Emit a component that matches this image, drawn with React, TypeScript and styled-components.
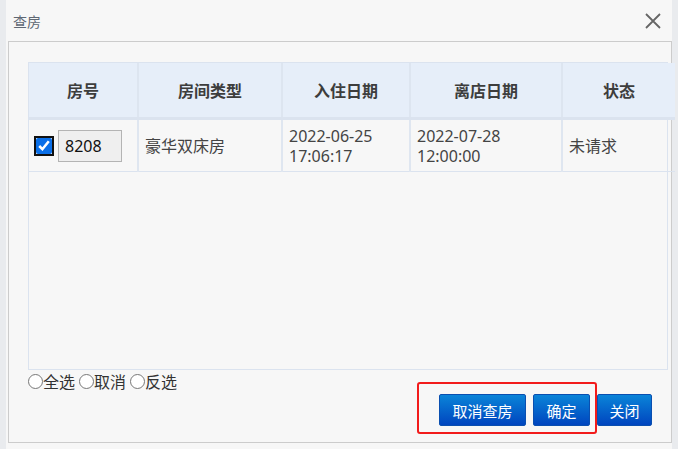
import styled, { createGlobalStyle } from "styled-components";

const GlobalStyle = createGlobalStyle`
  html, body {
    margin: 0;
    padding: 0;
    background: #e9ebee;
    font-family: "Noto Sans", "Noto Sans CJK SC", sans-serif;
  }
`

const Dialog = styled.div`
  width: 666px;
  height: 449px;
  margin-left: 6px;
  background: #f7f7f7;
  display: flex;
  flex-direction: column;
  box-sizing: border-box;
  padding: 0 0 6px 2px;
`

const TitleBar = styled.div`
  height: 41px;
  display: flex;
  align-items: center;
  justify-content: space-between;
  padding: 0 10px 0 5px;
  box-sizing: border-box;
  color: #5f6874;
  font-size: 14px;
`

const CloseBtn = styled.button`
  border: none;
  background: none;
  padding: 0;
  display: flex;
  color: #666;
  cursor: pointer;
`

const Body = styled.div`
  flex: 1;
  border: 1px solid #cccccc;
  padding: 20px 3px 0 19px;
  position: relative;
  display: flex;
  flex-direction: column;
`

const TableBox = styled.div`
  height: 308px;
  border: 1px solid #dbe3ef;
  box-sizing: border-box;
  background: #f7f7f7;
`

const Table = styled.table`
  width: 638px;
  border-collapse: collapse;
  table-layout: fixed;
  font-size: 16px;
  color: #444;
`

const Th = styled.th<{ w: number }>`
  width: ${p => p.w}px;
  height: 54px;
  padding: 0;
  background: #e6eef9;
  border-right: 2px solid #dde5f0;
  border-bottom: 3px solid #dbe3ef;
  font-weight: 700;
  color: #3d3d3d;
  &:last-child { border-right: none; }
`

const Td = styled.td`
  height: 51px;
  border-right: 2px solid #dfe6f0;
  border-bottom: 1px solid #dbe3ef;
  padding: 0 6px;
  line-height: 20px;
  &:last-child { border-right: none; }
`

const RoomCell = styled.div`
  display: flex;
  align-items: center;
  gap: 6px;
`

const Check = styled.input`
  width: 16px;
  height: 16px;
  margin: 0 0 0 1px;
  accent-color: #0a6fe8;
  outline: 2px solid #111;
  outline-offset: 0;
  border-radius: 2px;
`

const RoomInput = styled.input`
  width: 64px;
  height: 32px;
  box-sizing: border-box;
  background: #efefef;
  border: 1px solid #b4b4b4;
  padding: 0 6px;
  font-size: 16px;
  font-family: "Noto Sans", sans-serif;
  color: #111;
`

const RadioRow = styled.div`
  display: flex;
  align-items: center;
  gap: 4px;
  font-size: 16px;
  color: #333;
  height: 22px;
  label {
    display: flex;
    align-items: center;
  }
  input {
    margin: 0;
    width: 15px;
    height: 15px;
  }
`

const Buttons = styled.div`
  display: flex;
  justify-content: flex-end;
  gap: 7px;
  margin-top: 2px;
  padding-right: 16px;
`

const BlueButton = styled.button<{ w: number }>`
  width: ${p => p.w}px;
  height: 32px;
  border: 1px solid #0a4fb0;
  border-radius: 2px;
  background: linear-gradient(to bottom, #0a84d8, #0045bf);
  color: #fff;
  font-size: 15px;
  font-family: "Noto Sans CJK SC", sans-serif;
  cursor: pointer;
`

const Highlight = styled.div`
  position: absolute;
  left: 408px;
  top: 340px;
  width: 180px;
  height: 52px;
  box-sizing: border-box;
  border: 2px solid #f21b1b;
  border-radius: 3px;
  pointer-events: none;
`

export default function App() {
  return (
    <>
      <GlobalStyle />
      <Dialog>
        <TitleBar>
          <span>查房</span>
          <CloseBtn>
            <svg width="18" height="18" viewBox="0 0 18 18" stroke="currentColor" strokeWidth="1.8">
              <path d="M2 2 L16 16 M16 2 L2 16" />
            </svg>
          </CloseBtn>
        </TitleBar>
        <Body>
          <TableBox>
            <Table>
              <thead>
                <tr>
                  <Th w={108}>房号</Th>
                  <Th w={142}>房间类型</Th>
                  <Th w={126}>入住日期</Th>
                  <Th w={150}>离店日期</Th>
                  <Th w={112}>状态</Th>
                </tr>
              </thead>
              <tbody>
                <tr>
                  <Td>
                    <RoomCell>
                      <Check type="checkbox" defaultChecked />
                      <RoomInput defaultValue="8208" readOnly />
                    </RoomCell>
                  </Td>
                  <Td>豪华双床房</Td>
                  <Td>2022-06-25<br />17:06:17</Td>
                  <Td>2022-07-28<br />12:00:00</Td>
                  <Td>未请求</Td>
                </tr>
              </tbody>
            </Table>
          </TableBox>
          <RadioRow>
            <label><input type="radio" name="sel" />全选</label>
            <label><input type="radio" name="sel" />取消</label>
            <label><input type="radio" name="sel" />反选</label>
          </RadioRow>
          <Buttons>
            <BlueButton w={87}>取消查房</BlueButton>
            <BlueButton w={57}>确定</BlueButton>
            <BlueButton w={55}>关闭</BlueButton>
          </Buttons>
          <Highlight />
        </Body>
      </Dialog>
    </>
  )
}
